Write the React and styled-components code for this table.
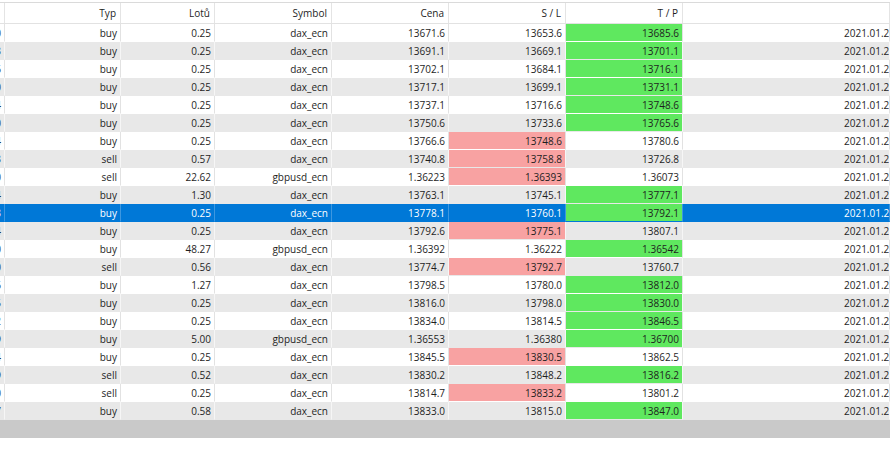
import React from 'react'
import styled, { createGlobalStyle } from 'styled-components'

const Global = createGlobalStyle`
  html, body { margin:0; padding:0; background:#fff; }
  body { font-family:"Open Sans","Noto Sans",sans-serif; overflow:hidden; }
`

const COLS = '5px 116px 94px 117px 117px 117px 117px 1fr'

const Page = styled.div`
  width:890px;
  height:450px;
  overflow:hidden;
  padding-top:2px;
  box-sizing:border-box;
  display:flex;
  flex-direction:column;
`
const Header = styled.div`
  display:grid;
  grid-template-columns:${COLS};
  height:22px;
  border-top:1px solid #dadada;
  border-bottom:1px solid #e2e2e2;
  box-sizing:border-box;
  background:#fff;
`
const HeadCell = styled.div`
  display:flex;
  align-items:center;
  justify-content:flex-end;
  padding-right:4px;
  font-size:10px;
  color:#1e1e1e;
  border-right:1px solid #e4e4e4;
  overflow:hidden;
  white-space:nowrap;
`
const Row = styled.div`
  display:grid;
  grid-template-columns:${COLS};
  height:18px;
  background:${p => p.$sel ? '#0078d7' : p.$alt ? '#e8e8e8' : '#fff'};
  color:${p => p.$sel ? '#fff' : '#1e1e1e'};
`
const Cell = styled.div`
  display:flex;
  align-items:center;
  justify-content:${p => p.$left ? 'flex-start' : 'flex-end'};
  padding-right:${p => p.$left ? 0 : 3}px;
  padding-left:${p => p.$left ? 161 : 0}px;
  font-size:10px;
  white-space:nowrap;
  overflow:hidden;
  border-right:1px solid ${p => p.$sel ? '#3d97e0' : p.$alt ? '#f6f6f6' : '#e2e2e2'};
  border-bottom:1px solid transparent;
  background:${p => p.$mark === 'tp' ? '#5fe85f' : p.$mark === 'sl' ? '#f8a2a2' : 'transparent'};
  background-clip:padding-box;
  color:${p => p.$mark ? '#1e1e1e' : 'inherit'};
`
const ScrollBar = styled.div`
  height:18px;
  background:#c9c9c9;
`
const Fill = styled.div`
  flex:1;
  background:#fff;
`

const rows = [
  ['290641380', 'buy', '0.25', 'dax_ecn', '13671.6', '13653.6', '13685.6', 'tp', '2021.01.25 08:02:11'],
  ['290642143', 'buy', '0.25', 'dax_ecn', '13691.1', '13669.1', '13701.1', 'tp', '2021.01.25 08:14:37'],
  ['290643006', 'buy', '0.25', 'dax_ecn', '13702.1', '13684.1', '13716.1', 'tp', '2021.01.25 08:31:05'],
  ['290644300', 'buy', '0.25', 'dax_ecn', '13717.1', '13699.1', '13731.1', 'tp', '2021.01.25 08:46:52'],
  ['290645114', 'buy', '0.25', 'dax_ecn', '13737.1', '13716.6', '13748.6', 'tp', '2021.01.25 09:03:19'],
  ['290646200', 'buy', '0.25', 'dax_ecn', '13750.6', '13733.6', '13765.6', 'tp', '2021.01.25 09:21:44'],
  ['290647014', 'buy', '0.25', 'dax_ecn', '13766.6', '13748.6', '13780.6', 'sl', '2021.01.25 09:40:08'],
  ['290648113', 'sell', '0.57', 'dax_ecn', '13740.8', '13758.8', '13726.8', 'sl', '2021.01.25 10:02:26'],
  ['290649220', 'sell', '22.62', 'gbpusd_ecn', '1.36223', '1.36393', '1.36073', 'sl', '2021.01.25 10:18:51'],
  ['290650014', 'buy', '1.30', 'dax_ecn', '13763.1', '13745.1', '13777.1', 'tp', '2021.01.25 10:35:13'],
  ['290651233', 'buy', '0.25', 'dax_ecn', '13778.1', '13760.1', '13792.1', 'tp', '2021.01.25 10:52:40'],
  ['290652104', 'buy', '0.25', 'dax_ecn', '13792.6', '13775.1', '13807.1', 'sl', '2021.01.25 11:10:02'],
  ['290653200', 'buy', '48.27', 'gbpusd_ecn', '1.36392', '1.36222', '1.36542', 'tp', '2021.01.25 11:27:35'],
  ['290654010', 'sell', '0.56', 'dax_ecn', '13774.7', '13792.7', '13760.7', 'sl', '2021.01.25 11:44:59'],
  ['290655006', 'buy', '1.27', 'dax_ecn', '13798.5', '13780.0', '13812.0', 'tp', '2021.01.25 12:03:21'],
  ['290656115', 'buy', '0.25', 'dax_ecn', '13816.0', '13798.0', '13830.0', 'tp', '2021.01.25 12:20:47'],
  ['290657202', 'buy', '0.25', 'dax_ecn', '13834.0', '13814.5', '13846.5', 'tp', '2021.01.25 12:38:10'],
  ['290658019', 'buy', '5.00', 'gbpusd_ecn', '1.36553', '1.36380', '1.36700', 'tp', '2021.01.25 12:55:33'],
  ['290659204', 'buy', '0.25', 'dax_ecn', '13845.5', '13830.5', '13862.5', 'sl', '2021.01.25 13:12:58'],
  ['290660109', 'sell', '0.52', 'dax_ecn', '13830.2', '13848.2', '13816.2', 'tp', '2021.01.25 13:30:24'],
  ['290661200', 'sell', '0.25', 'dax_ecn', '13814.7', '13833.2', '13801.2', 'sl', '2021.01.25 13:47:49'],
  ['290662017', 'buy', '0.58', 'dax_ecn', '13833.0', '13815.0', '13847.0', 'tp', '2021.01.25 14:05:12'],
]

const heads = ['', 'Typ', 'Lotů', 'Symbol', 'Cena', 'S / L', 'T / P', '']

export default function App() {
  return (
    <Page>
      <Global />
      <Header>
        {heads.map((h, i) => <HeadCell key={i}>{h}</HeadCell>)}
      </Header>
      {rows.map((r, i) => {
        const sel = i === 10
        const alt = i % 2 === 1
        const [ticket, typ, lots, sym, price, sl, tp, hit, time] = r
        return (
          <Row key={i} $sel={sel} $alt={alt}>
            <Cell $sel={sel} $alt={alt}>{ticket}</Cell>
            <Cell $sel={sel} $alt={alt}>{typ}</Cell>
            <Cell $sel={sel} $alt={alt}>{lots}</Cell>
            <Cell $sel={sel} $alt={alt}>{sym}</Cell>
            <Cell $sel={sel} $alt={alt}>{price}</Cell>
            <Cell $sel={sel} $alt={alt} $mark={hit === 'sl' && !sel ? 'sl' : null}>{sl}</Cell>
            <Cell $sel={sel} $alt={alt} $mark={hit === 'tp' ? 'tp' : null}>{tp}</Cell>
            <Cell $sel={sel} $alt={alt} $left>{time}</Cell>
          </Row>
        )
      })}
      <ScrollBar />
      <Fill />
    </Page>
  )
}
